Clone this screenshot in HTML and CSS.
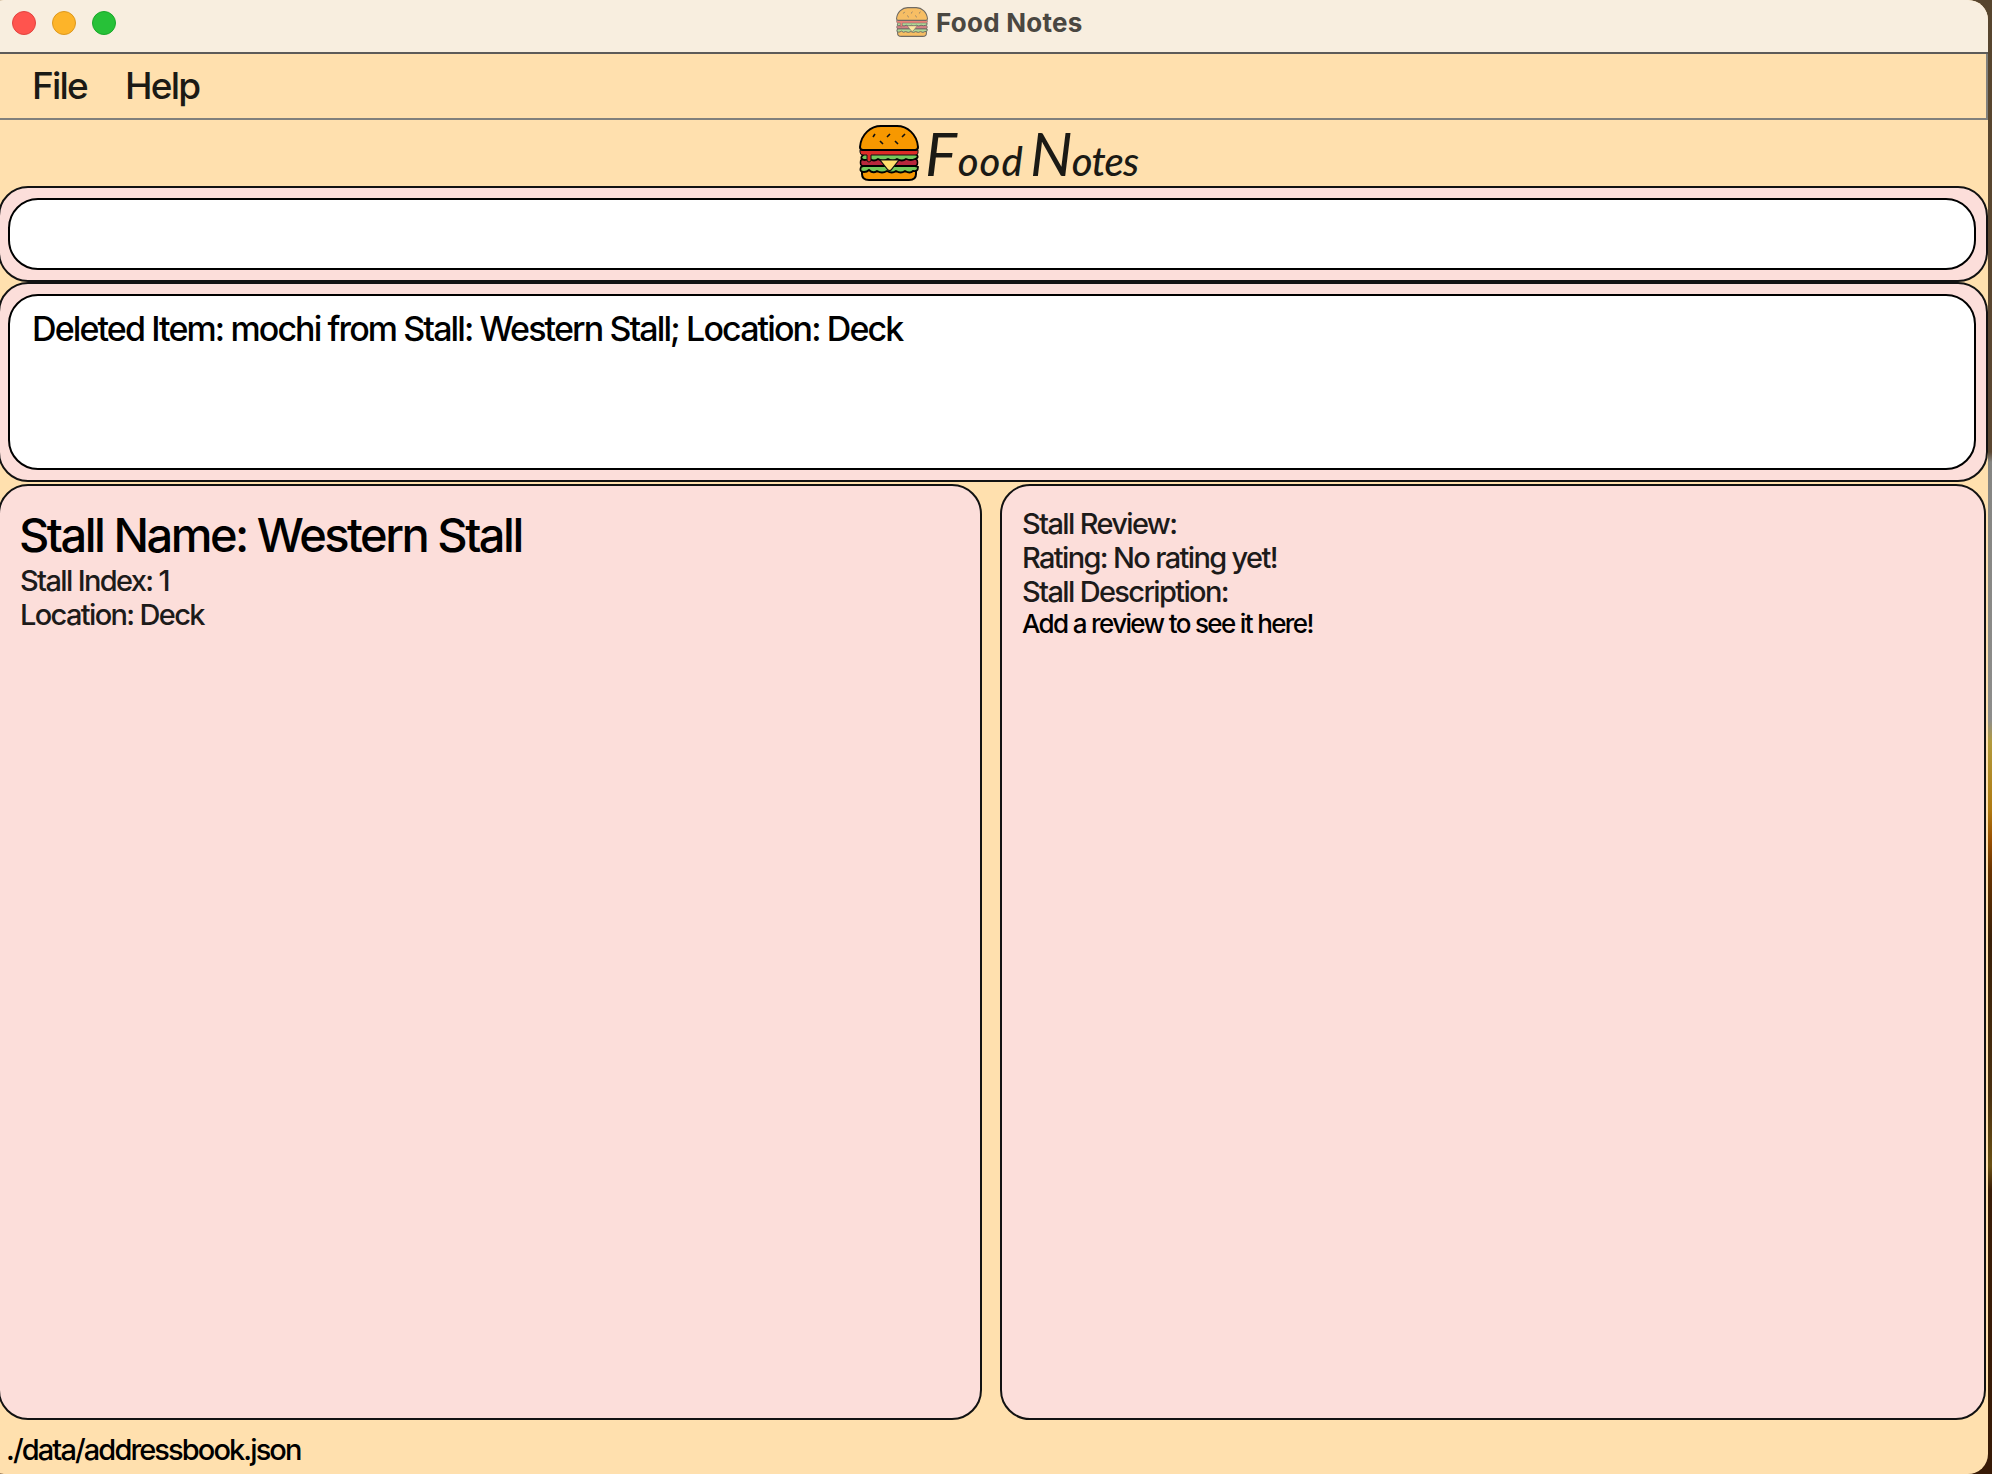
FILE: index.html
```html
<!DOCTYPE html>
<html lang="en">
<head>
<meta charset="utf-8">
<title>Food Notes</title>
<link rel="stylesheet" href="styles.css">
</head>
<body>
<svg class="defs" aria-hidden="true">
  <symbol id="burger" viewBox="0 0 60 56">
    <path d="M3 40v9q0 6 7 6h40q7 0 7-6v-9z" fill="#f79800" stroke="#000" stroke-width="2"/>
    <rect x="1.500" y="34" width="57" height="7" rx="3" fill="#b8263c" stroke="#000" stroke-width="1.500"/>
    <path d="M2 42q-2 5 3 5 3 0 5-2 4 4 8 1 5 3 10 0 5 3 9 0 5 3 9 0 5 3 8 0 5 1 5-4l-4-1H5z" fill="#75c95c" stroke="#000" stroke-width="1.800"/>
    <path d="M3 31q-2 3 2 4 4 0 6-1 4 3 8 0 5 3 10 0 5 3 9 0 5 3 9 0 5 2 9 0 4-1 2-4l-3-1H5z" fill="#75c95c" stroke="#000" stroke-width="1.800"/>
    <path d="M1 25h58v3q0 2-3 2H12v5q0 2-2 2t-2-2v-5H4q-3 0-3-3z" fill="#dc2b26" stroke="#111" stroke-width="1"/>
    <path d="M21 35h19l-8 10q-1 1-3 0z" fill="#ffe06d" stroke="#111" stroke-width="1.200"/>
    <path d="M1 22C2 9 12 1 22 1h16c10 0 20 8 21 21q0 3-3 3H4q-3 0-3-3z" fill="#f79800" stroke="#000" stroke-width="2"/>
    <path d="M14 12l2-3M28 12l3-3M43 12l3-3M21 16l3 3M36 16l3 3" stroke="#111" stroke-width="1.600"/>
  </symbol>
</svg>
<div class="window">
  <header class="titlebar">
    <div class="lights"><i class="light red"></i><i class="light amber"></i><i class="light green"></i></div>
    <svg class="title-icon"><use href="#burger"/></svg>
    <span class="title">Food Notes</span>
  </header>
  <nav class="menu"><span class="file">File</span><span class="help">Help</span></nav>
  <div class="brand">
    <svg class="brand-icon"><use href="#burger"/></svg>
    <div class="script"><span class="food"><b>F</b>ood</span><span class="notes"><b>N</b>otes</span></div>
  </div>
  <main class="content">
    <section class="band command"><div class="field"></div></section>
    <section class="band result"><div class="field"><span class="message">Deleted Item: mochi from Stall: Western Stall; Location: Deck</span></div></section>
    <div class="panels">
      <section class="panel stall">
        <h1>Stall Name: Western Stall</h1>
        <p>Stall Index: 1</p>
        <p>Location: Deck</p>
      </section>
      <section class="panel review">
        <p>Stall Review:</p>
        <p>Rating: No rating yet!</p>
        <p>Stall Description:</p>
        <p class="hint">Add a review to see it here!</p>
      </section>
    </div>
  </main>
  <footer class="status">./data/addressbook.json</footer>
</div>
</body>
</html>
```
FILE: styles.css
```css
* { box-sizing: border-box; }
body {
  margin: 0;
  width: 1992px;
  height: 1474px;
  overflow: hidden;
  font-family: Inter, "Liberation Sans", sans-serif;
  font-weight: 450;
  color: #000;
  background: linear-gradient(to bottom, #57452e 0, #5a4630 452px, #858582 462px, #8d8d8b 720px, #b29a3c 742px, #b07a10 810px, #9a5000 840px, #6b3400 870px, #3a2008 940px, #4a3010 1095px, #6a5012 1166px, #3a1c06 1190px, #381a06 1474px);
}
h1, p { margin: 0; font-weight: 450; }
.defs { display: block; width: 0; height: 0; }
.window {
  display: flex;
  flex-direction: column;
  width: 2004px;
  height: 1474px;
  margin-left: -16px;
  border-radius: 20px;
  overflow: hidden;
  background: #ffe0ae;
}
.titlebar {
  display: flex;
  align-items: center;
  height: 54px;
  padding: 0 0 8px 28px;
  border-bottom: 2px solid #5d5b59;
  background: #f8eedf;
}
.lights { display: flex; gap: 16px; width: 884px; padding-top: 2px; }
.light { width: 24px; height: 24px; border-radius: 50%; border: 1px solid; }
.red { background: #ff544e; border-color: #e2433f; }
.amber { background: #fdb429; border-color: #dd981d; }
.green { background: #27c138; border-color: #1aa82a; }
.title-icon { width: 32px; height: 30px; opacity: .55; }
.title { margin-left: 8px; font-size: 26px; font-weight: 700; color: #4a4741; letter-spacing: .25px; white-space: nowrap; }
.menu {
  display: flex;
  align-items: center;
  height: 66px;
  border: solid #81807c;
  border-width: 0 2px 2px 0;
  padding: 0 0 2px 48px;
  font-size: 37px;
  letter-spacing: -1.8px;
  color: #1b1a15;
}
.menu span { white-space: nowrap; }
.help { margin-left: 38px; }
.brand { display: flex; height: 66px; padding: 5px 0 0 875px; }
.brand-icon { width: 60px; height: 56px; }
.script {
  display: flex;
  align-items: baseline;
  height: 60px;
  margin-left: 6px;
  font: italic 500 40px/56px Lato, sans-serif;
  color: #1b1a15;
}
.script b { font-size: 60px; font-weight: 400; line-height: 56px; }
.food { width: 105px; letter-spacing: 1px; }
.notes { letter-spacing: -.8px; }
.content { flex: none; width: 1990px; margin-left: 14px; }
.band { border: 2px solid #121212; border-radius: 30px; background: #fcdeda; padding: 10px 10px 10px 8px; }
.field { height: 100%; border: 2px solid #000; border-radius: 30px; background: #fff; }
.command { height: 96px; }
.result { height: 200px; }
.result .field { padding: 11px 22px; font-size: 34px; line-height: 44px; white-space: nowrap; }
.message { letter-spacing: -1.89px; }
.panels { display: grid; grid-template-columns: 984px 986px; gap: 18px; height: 936px; margin-top: 2px; }
.panel { border: 2px solid #121212; border-radius: 30px; background: #fcdeda; padding: 21px 20px; white-space: nowrap; }
.panel p { font-size: 29px; line-height: 34px; color: #1d1b1a; letter-spacing: -1.65px; }
.panel h1 { font-size: 47px; line-height: 56px; letter-spacing: -2.5px; margin: 0 0 1px -1px; }
.panel .hint { font-size: 26px; line-height: 30px; color: #000; letter-spacing: -1.65px; }
.status { flex: 1; padding: 13px 0 0 22px; font-size: 29px; line-height: 34px; letter-spacing: -1.9px; }
```
